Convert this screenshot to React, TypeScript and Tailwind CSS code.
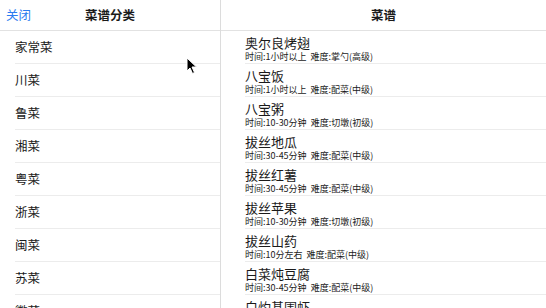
const categories = ["家常菜", "川菜", "鲁菜", "湘菜", "粤菜", "浙菜", "闽菜", "苏菜", "徽菜"];

const recipes = [
  { name: "奥尔良烤翅", time: "1小时以上", level: "掌勺(高级)" },
  { name: "八宝饭", time: "1小时以上", level: "配菜(中级)" },
  { name: "八宝粥", time: "10-30分钟", level: "切墩(初级)" },
  { name: "拔丝地瓜", time: "30-45分钟", level: "配菜(中级)" },
  { name: "拔丝红薯", time: "30-45分钟", level: "配菜(中级)" },
  { name: "拔丝苹果", time: "10-30分钟", level: "切墩(初级)" },
  { name: "拔丝山药", time: "10分左右", level: "配菜(中级)" },
  { name: "白菜炖豆腐", time: "30-45分钟", level: "配菜(中级)" },
  { name: "白灼基围虾", time: "10-30分钟", level: "配菜(中级)" },
];

function Cursor() {
  return (
    <svg className="absolute left-[186px] top-[57px]" width="12" height="18" viewBox="0 0 12 18">
      <path d="M1 1 L1 14 L4 11 L6.5 16.5 L8.5 15.5 L6 10 L10.5 10 Z" fill="#000" stroke="#fff" strokeWidth="1" />
    </svg>
  );
}

export default function App() {
  return (
    <div
      className="relative flex h-[308px] w-[546px] overflow-hidden bg-white text-[#1a1a1a]"
      style={{ fontFamily: '"Noto Sans CJK SC", "Noto Sans", sans-serif' }}
    >
      <div className="flex w-[221px] shrink-0 flex-col border-r border-[#dcdcdc]">
        <div className="relative flex h-[31px] shrink-0 items-center justify-center border-b border-[#e2e2e2]">
          <span className="absolute left-[6px] text-[12.5px] text-[#2b7cf0]">关闭</span>
          <span className="text-[12.5px] font-semibold">菜谱分类</span>
        </div>
        <div className="flex flex-col">
          {categories.map((c) => (
            <div key={c} className="flex h-[33px] shrink-0 items-center pl-[15px]">
              <div className="flex h-full w-full items-center border-b border-[#ececec] text-[12.5px]">{c}</div>
            </div>
          ))}
        </div>
      </div>
      <div className="flex flex-1 flex-col">
        <div className="flex h-[31px] shrink-0 items-center justify-center border-b border-[#e2e2e2]">
          <span className="text-[12.5px] font-semibold">菜谱</span>
        </div>
        <div className="flex flex-col">
          {recipes.map((r) => (
            <div key={r.name} className="h-[33px] shrink-0 pl-[24px]">
              <div className="flex h-full flex-col border-b border-[#ececec] pt-[4px]">
                <span className="text-[13px] leading-[16px]">{r.name}</span>
                <span className="text-[9px] leading-[11px]">
                  时间:{r.time}&nbsp;&nbsp;难度:{r.level}
                </span>
              </div>
            </div>
          ))}
        </div>
      </div>
      <Cursor />
    </div>
  );
}
